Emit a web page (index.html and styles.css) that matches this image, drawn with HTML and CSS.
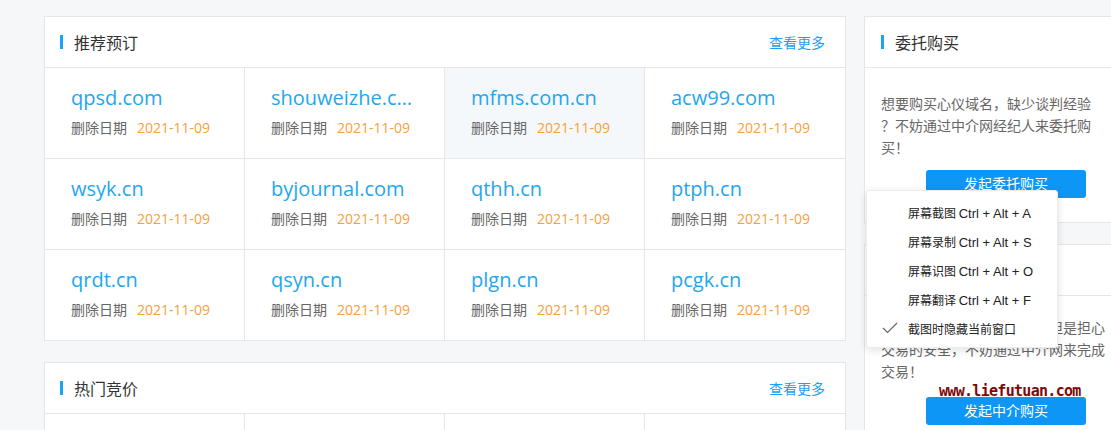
FILE: index.html
```html
<!DOCTYPE html>
<html lang="zh-CN">
<head>
    <meta charset="UTF-8">
    <meta name="viewport" content="width=device-width, initial-scale=1.0">
    <title>域名交易</title>
    <link rel="stylesheet" href="styles.css">
</head>
<body>
    <div class="page">
        <div class="main">
            <div class="card">
                <div class="card-head">
                    <h2 class="card-title">推荐预订</h2>
                    <a class="more" href="#">查看更多</a>
                </div>
                <div class="domain-grid">
                    <div class="domain-cell"><a class="domain" href="#">qpsd.com</a><p class="date"><span>删除日期</span><em>2021-11-09</em></p></div>
                    <div class="domain-cell"><a class="domain" href="#">shouweizhe.com</a><p class="date"><span>删除日期</span><em>2021-11-09</em></p></div>
                    <div class="domain-cell active"><a class="domain" href="#">mfms.com.cn</a><p class="date"><span>删除日期</span><em>2021-11-09</em></p></div>
                    <div class="domain-cell"><a class="domain" href="#">acw99.com</a><p class="date"><span>删除日期</span><em>2021-11-09</em></p></div>
                    <div class="domain-cell"><a class="domain" href="#">wsyk.cn</a><p class="date"><span>删除日期</span><em>2021-11-09</em></p></div>
                    <div class="domain-cell"><a class="domain" href="#">byjournal.com</a><p class="date"><span>删除日期</span><em>2021-11-09</em></p></div>
                    <div class="domain-cell"><a class="domain" href="#">qthh.cn</a><p class="date"><span>删除日期</span><em>2021-11-09</em></p></div>
                    <div class="domain-cell"><a class="domain" href="#">ptph.cn</a><p class="date"><span>删除日期</span><em>2021-11-09</em></p></div>
                    <div class="domain-cell"><a class="domain" href="#">qrdt.cn</a><p class="date"><span>删除日期</span><em>2021-11-09</em></p></div>
                    <div class="domain-cell"><a class="domain" href="#">qsyn.cn</a><p class="date"><span>删除日期</span><em>2021-11-09</em></p></div>
                    <div class="domain-cell"><a class="domain" href="#">plgn.cn</a><p class="date"><span>删除日期</span><em>2021-11-09</em></p></div>
                    <div class="domain-cell"><a class="domain" href="#">pcgk.cn</a><p class="date"><span>删除日期</span><em>2021-11-09</em></p></div>
                </div>
            </div>

            <div class="card">
                <div class="card-head">
                    <h2 class="card-title">热门竞价</h2>
                    <a class="more" href="#">查看更多</a>
                </div>
                <div class="domain-grid">
                    <div class="domain-cell"><a class="domain" href="#">zhtm.cn</a><p class="date"><span>当前价格</span><em>¥ 1,200</em></p></div>
                    <div class="domain-cell"><a class="domain" href="#">kfsj.com</a><p class="date"><span>当前价格</span><em>¥ 3,500</em></p></div>
                    <div class="domain-cell"><a class="domain" href="#">ybwl.cn</a><p class="date"><span>当前价格</span><em>¥ 880</em></p></div>
                    <div class="domain-cell"><a class="domain" href="#">xmjt.com</a><p class="date"><span>当前价格</span><em>¥ 2,100</em></p></div>
                </div>
            </div>
        </div>

        <div class="side">
            <div class="card side-card">
                <div class="card-head">
                    <h2 class="card-title">委托购买</h2>
                </div>
                <div class="side-body">
                    <p>想要购买心仪域名，缺少谈判经验<br>？不妨通过中介网经纪人来委托购买！</p>
                    <a class="btn" href="#">发起委托购买</a>
                </div>
            </div>

            <div class="card side-card">
                <div class="card-head">
                    <h2 class="card-title">中介购买</h2>
                </div>
                <div class="side-body second">
                    <p>与卖家谈好价格准备购买，但是担心交易的安全，不妨通过中介网来完成交易！</p>
                    <a class="btn" href="#">发起中介购买</a>
                </div>
            </div>
        </div>
    </div>

    <!-- screenshot tool menu floating over the page -->
    <ul class="shot-menu">
        <li>屏幕截图 <span class="key">Ctrl + Alt + A</span></li>
        <li>屏幕录制 <span class="key">Ctrl + Alt + S</span></li>
        <li>屏幕识图 <span class="key">Ctrl + Alt + O</span></li>
        <li>屏幕翻译 <span class="key">Ctrl + Alt + F</span></li>
        <li class="checked">
            <svg class="check" width="16" height="12" viewBox="0 0 16 12"><polyline points="1,6 5.5,10.5 15,1" fill="none" stroke="#666" stroke-width="1.2"/></svg>
            截图时隐藏当前窗口
        </li>
    </ul>

    <div class="watermark">www.liefutuan.com</div>
</body>
</html>
```

FILE: styles.css
```css
html, body {
    overflow: hidden;
}
body {
    margin: 0;
    background-color: #f5f7f9;
    font-family: "Open Sans", "Noto Sans CJK SC", sans-serif;
    color: #333;
    height: 430px;
}
a {
    text-decoration: none;
}
.page {
    display: flex;
    align-items: flex-start;
    padding: 16px 0 0 44px;
    width: 1120px;
}
.main {
    width: 802px;
    flex-shrink: 0;
}
.card {
    background-color: #fff;
    border: 1px solid #e6e6e6;
    margin-bottom: 21px;
}
.card-head {
    display: flex;
    align-items: center;
    justify-content: space-between;
    height: 50px;
    padding: 0 20px 0 15px;
    border-bottom: 1px solid #e6e6e6;
}
.card-title {
    margin: 0;
    font-size: 16px;
    font-weight: normal;
    color: #333;
    display: flex;
    align-items: center;
}
.card-title::before {
    content: "";
    width: 3px;
    height: 14px;
    background-color: #1aa3f2;
    margin-right: 11px;
}
.more {
    font-size: 14px;
    color: #1aa0f0;
}
.domain-grid {
    display: grid;
    grid-template-columns: repeat(4, 200px);
}
.domain-cell {
    height: 73px;
    padding: 17px 0 0 26px;
    border-right: 1px solid #e6e6e6;
    border-bottom: 1px solid #e6e6e6;
    width: 173px;
    overflow: hidden;
}
.domain-cell:nth-child(4n) {
    border-right: none;
    width: 174px;
}
.domain-cell:nth-last-child(-n+4) {
    border-bottom: none;
}
.domain-cell.active {
    background-color: #f5f8fa;
}
.domain {
    display: block;
    font-size: 20px;
    line-height: 26px;
    color: #1ea7f0;
    white-space: nowrap;
    overflow: hidden;
    text-overflow: ellipsis;
    width: 146px;
}
.date {
    margin: 7px 0 0;
    font-size: 14px;
    line-height: 20px;
}
.date span {
    color: #666;
    margin-right: 10px;
}
.date em {
    font-style: normal;
    color: #f7a03c;
}
.side {
    margin-left: 18px;
    width: 264px;
    flex-shrink: 0;
}
.side-card .card-head {
    padding-left: 16px;
}
.side-body {
    padding: 25px 16px 24px;
}
.side-body p {
    margin: 0;
    width: 226px;
    font-size: 14px;
    line-height: 22px;
    color: #666;
}
.side-body.second {
    padding-top: 21px;
}
.btn {
    display: block;
    width: 160px;
    height: 28px;
    line-height: 28px;
    margin: 11px 0 0 45px;
    background-color: #0e96f6;
    color: #fff;
    font-size: 14px;
    text-align: center;
    border-radius: 3px;
}
.side-body.second .btn {
    margin-top: 14px;
}
.shot-menu {
    position: absolute;
    left: 866px;
    top: 190px;
    width: 192px;
    height: 158px;
    margin: 0;
    padding: 7px 0 0;
    box-sizing: border-box;
    list-style: none;
    background-color: #fff;
    border: 1px solid #ececec;
    border-radius: 3px;
    box-shadow: 0 2px 8px rgba(0,0,0,0.12);
}
.shot-menu li {
    position: relative;
    height: 29px;
    line-height: 29px;
    padding-left: 41px;
    font-family: "Noto Sans CJK SC", sans-serif;
    font-size: 12px;
    color: #222;
}
.key {
    font-family: "Liberation Sans", sans-serif;
    font-size: 13px;
}
.check {
    position: absolute;
    left: 15px;
    top: 8px;
}
.watermark {
    position: absolute;
    left: 939px;
    top: 382px;
    font-family: "DejaVu Sans Mono", monospace;
    font-weight: bold;
    font-size: 15px;
    letter-spacing: -0.7px;
    color: #7d0a0a;
    text-shadow: 0 0 1px #fff;
}
```
